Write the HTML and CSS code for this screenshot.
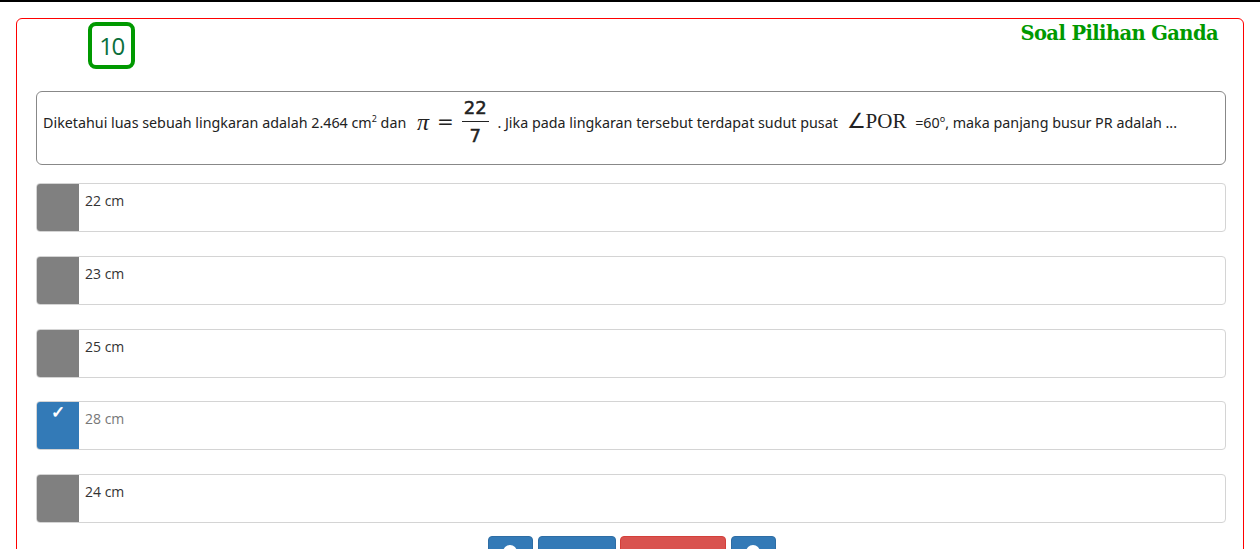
FILE: index.html
```html
<!DOCTYPE html>
<html>
<head>
<meta charset="utf-8">
<link rel="stylesheet" href="styles.css">
</head>
<body>
<div class="topbar"></div>
<div class="wrap">
  <div class="card">
    <div class="header">
      <div class="badge">10</div>
      <div class="title">Soal Pilihan Ganda</div>
    </div>
    <div class="question">
      <span class="q">Diketahui luas sebuah lingkaran adalah 2.464 cm<sup>2</sup> dan <span class="math"><i class="pi">π</i><span class="eq">=</span><span class="frac"><span class="num">22</span><span class="den">7</span></span></span> . Jika pada lingkaran tersebut terdapat sudut pusat <span class="ang">∠POR</span> =60<sup>o</sup>, maka panjang busur PR adalah ...</span>
    </div>
    <div class="options">
      <div class="opt"><div class="mark"></div><div class="txt">22 cm</div></div>
      <div class="opt"><div class="mark"></div><div class="txt">23 cm</div></div>
      <div class="opt"><div class="mark"></div><div class="txt">25 cm</div></div>
      <div class="opt sel"><div class="mark">✓</div><div class="txt">28 cm</div></div>
      <div class="opt"><div class="mark"></div><div class="txt">24 cm</div></div>
    </div>
    <div class="buttons">
      <div class="btn blue w45"><span class="dot"></span></div>
      <div class="btn blue w78">Ragu</div>
      <div class="btn red w106">Kembali</div>
      <div class="btn blue w45"><span class="dot"></span></div>
    </div>
  </div>
</div>
</body>
</html>
```

FILE: styles.css
```css
html, body { margin: 0; padding: 0; background: #fff; overflow: hidden; }
body { font-family: "Open Sans", "Noto Sans", sans-serif; color: #333; }
.topbar { height: 2px; background: #000; }
.wrap { padding: 16px 16px 0 16px; }
.card {
  border: 1px solid #ff0000;
  border-radius: 6px;
  padding: 0 17px 40px 19px;
  min-height: 600px;
}
.header { display: flex; justify-content: space-between; align-items: flex-start; height: 72px; }
.badge {
  margin-top: 3px;
  margin-left: 52px;
  width: 39px; height: 39px;
  border: 4px solid #009900;
  border-radius: 8px;
  display: flex; align-items: center; justify-content: center;
  font-family: "Open Sans", sans-serif;
  font-size: 24px;
  color: #0a6f3c;
  letter-spacing: -1.5px;
}
.title {
  margin-top: 3px;
  margin-right: 8px;
  font-family: "DejaVu Serif", "Liberation Serif", serif;
  font-weight: bold;
  font-size: 19.5px;
  color: #009900;
  letter-spacing: -0.6px;
}
.question {
  border: 1px solid #888;
  border-radius: 6px;
  height: 72px;
  padding: 0 6px;
  display: flex; align-items: flex-start;
}
.q {
  margin-top: 3px;
  font-family: "Noto Sans", "Open Sans", sans-serif;
  font-size: 14.3px;
  color: #222;
  line-height: 52px;
  white-space: nowrap;
}
.q sup { font-size: 9px; line-height: 0; vertical-align: 6px; }
.math { display: inline-flex; align-items: center; vertical-align: middle; margin: 0 5px 0 7px; position: relative; top: -2px; }
.pi { font-family: "Liberation Serif", serif; font-size: 24px; font-style: italic; }
.eq { font-family: "DejaVu Serif", serif; font-size: 20px; margin: 0 8px; }
.frac { display: inline-flex; flex-direction: column; align-items: center; line-height: 1; font-family: "DejaVu Sans", sans-serif; font-size: 18px; font-weight: normal; color: #222; -webkit-text-stroke: 0.5px #222; }
.num { padding: 0 2px 4px; border-bottom: 1.5px solid #222; }
.den { padding-top: 5px; }
.ang { font-family: "Liberation Serif", serif; font-size: 21px; margin: 0 5px 0 5px; }
.options { margin-top: 18px; display: flex; flex-direction: column; gap: 23.75px; }
.opt {
  display: flex;
  height: 47px;
  border: 1px solid #d4d4d4;
  border-radius: 4px;
  overflow: hidden;
}
.mark {
  width: 42px; flex: none;
  background: #808080;
  color: #fff;
  text-align: center;
  font-size: 17px;
  font-weight: bold;
  line-height: 20px;
}
.sel .mark { background: #337ab7; }
.txt { padding: 7px 6px; font-size: 14px; color: #333; line-height: 20px; }
.sel .txt { color: #777; }
.buttons { display: flex; justify-content: center; margin-top: 13px; padding-left: 1px; }
.buttons .btn + .btn { margin-left: 5px; }
.buttons .w106 { margin-left: 4px !important; }
.btn {
  height: 34px;
  border-radius: 4px;
  color: #fff;
  font-size: 14px;
  display: flex; justify-content: center; padding-top: 8px; box-sizing: border-box;
}
.blue { background: #337ab7; border: 1px solid #2e6da4; }
.red { background: #d9534f; border: 1px solid #d43f3a; }
.w45 { width: 45px; } .w78 { width: 78px; } .w106 { width: 106px; }
.dot { width: 14px; height: 14px; border-radius: 50%; background: #fff; }
```
